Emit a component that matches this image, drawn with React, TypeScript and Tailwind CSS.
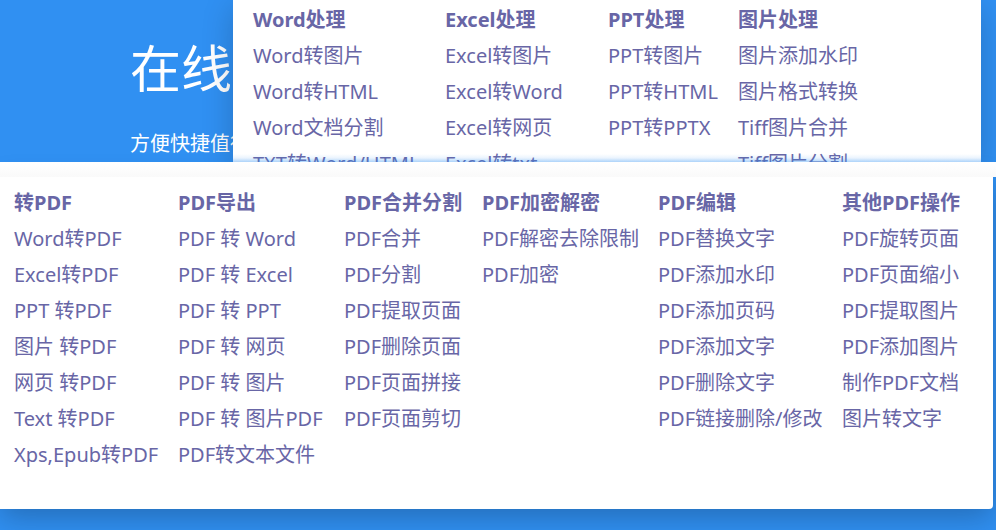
type Column = { title: string; items: string[] };

const officeColumns: Column[] = [
  { title: 'Word处理', items: ['Word转图片', 'Word转HTML', 'Word文档分割', 'TXT转Word/HTML'] },
  { title: 'Excel处理', items: ['Excel转图片', 'Excel转Word', 'Excel转网页', 'Excel转txt'] },
  { title: 'PPT处理', items: ['PPT转图片', 'PPT转HTML', 'PPT转PPTX'] },
  { title: '图片处理', items: ['图片添加水印', '图片格式转换', 'Tiff图片合并', 'Tiff图片分割'] },
];

const pdfColumns: Column[] = [
  {
    title: '转PDF',
    items: ['Word转PDF', 'Excel转PDF', 'PPT 转PDF', '图片 转PDF', '网页 转PDF', 'Text 转PDF', 'Xps,Epub转PDF'],
  },
  {
    title: 'PDF导出',
    items: ['PDF 转 Word', 'PDF 转 Excel', 'PDF 转 PPT', 'PDF 转 网页', 'PDF 转 图片', 'PDF 转 图片PDF', 'PDF转文本文件'],
  },
  { title: 'PDF合并分割', items: ['PDF合并', 'PDF分割', 'PDF提取页面', 'PDF删除页面', 'PDF页面拼接', 'PDF页面剪切'] },
  { title: 'PDF加密解密', items: ['PDF解密去除限制', 'PDF加密'] },
  {
    title: 'PDF编辑',
    items: ['PDF替换文字', 'PDF添加水印', 'PDF添加页码', 'PDF添加文字', 'PDF删除文字', 'PDF链接删除/修改'],
  },
  {
    title: '其他PDF操作',
    items: ['PDF旋转页面', 'PDF页面缩小', 'PDF提取图片', 'PDF添加图片', '制作PDF文档', '图片转文字'],
  },
];

function MenuColumn({ title, items }: Column) {
  return (
    <div className="whitespace-nowrap text-[20px] leading-9 text-[#6866a6]">
      <h2 className="font-bold">{title}</h2>
      <ul>
        {items.map((item) => (
          <li key={item}>
            <a href="#" className="hover:underline">
              {item}
            </a>
          </li>
        ))}
      </ul>
    </div>
  );
}

export default function App() {
  return (
    <div className="flex min-h-screen flex-col overflow-hidden bg-[#3090f2] font-['Noto_Sans','Noto_Sans_CJK_SC',sans-serif]">
      <header className="relative h-[162px] overflow-hidden">
        <div className="w-[233px] overflow-hidden whitespace-nowrap pl-[130px] pt-8 text-white">
          <h1 className="text-[51px] leading-[72px]">在线</h1>
          <p className="mt-[22px] text-[20px] leading-9">方便快捷值得</p>
        </div>
        <nav
          aria-label="Office"
          className="absolute inset-y-0 left-[233px] right-[15px] grid grid-cols-[192px_163px_130px_auto] bg-white pl-5 pt-[2px] shadow-[0_8px_30px_rgba(0,0,0,0.2)]"
        >
          {officeColumns.map((column) => (
            <MenuColumn key={column.title} {...column} />
          ))}
        </nav>
        <div className="pointer-events-none absolute bottom-0 left-[233px] right-[15px] h-2 bg-linear-to-b from-[#3090f2]/0 via-[#3090f2]/10 to-[#3090f2]/40" />
      </header>
      <div className="relative z-10 h-[15px] bg-linear-to-b from-white to-[#fafafa]" />
      <main className="pr-[3px]">
        <nav
          aria-label="PDF"
          className="grid grid-cols-[164px_166px_138px_176px_184px_auto] rounded-br bg-white pb-9 pl-[14px] pt-2 shadow-[0_8px_30px_rgba(0,0,0,0.25)]"
        >
          {pdfColumns.map((column) => (
            <MenuColumn key={column.title} {...column} />
          ))}
        </nav>
      </main>
    </div>
  );
}
